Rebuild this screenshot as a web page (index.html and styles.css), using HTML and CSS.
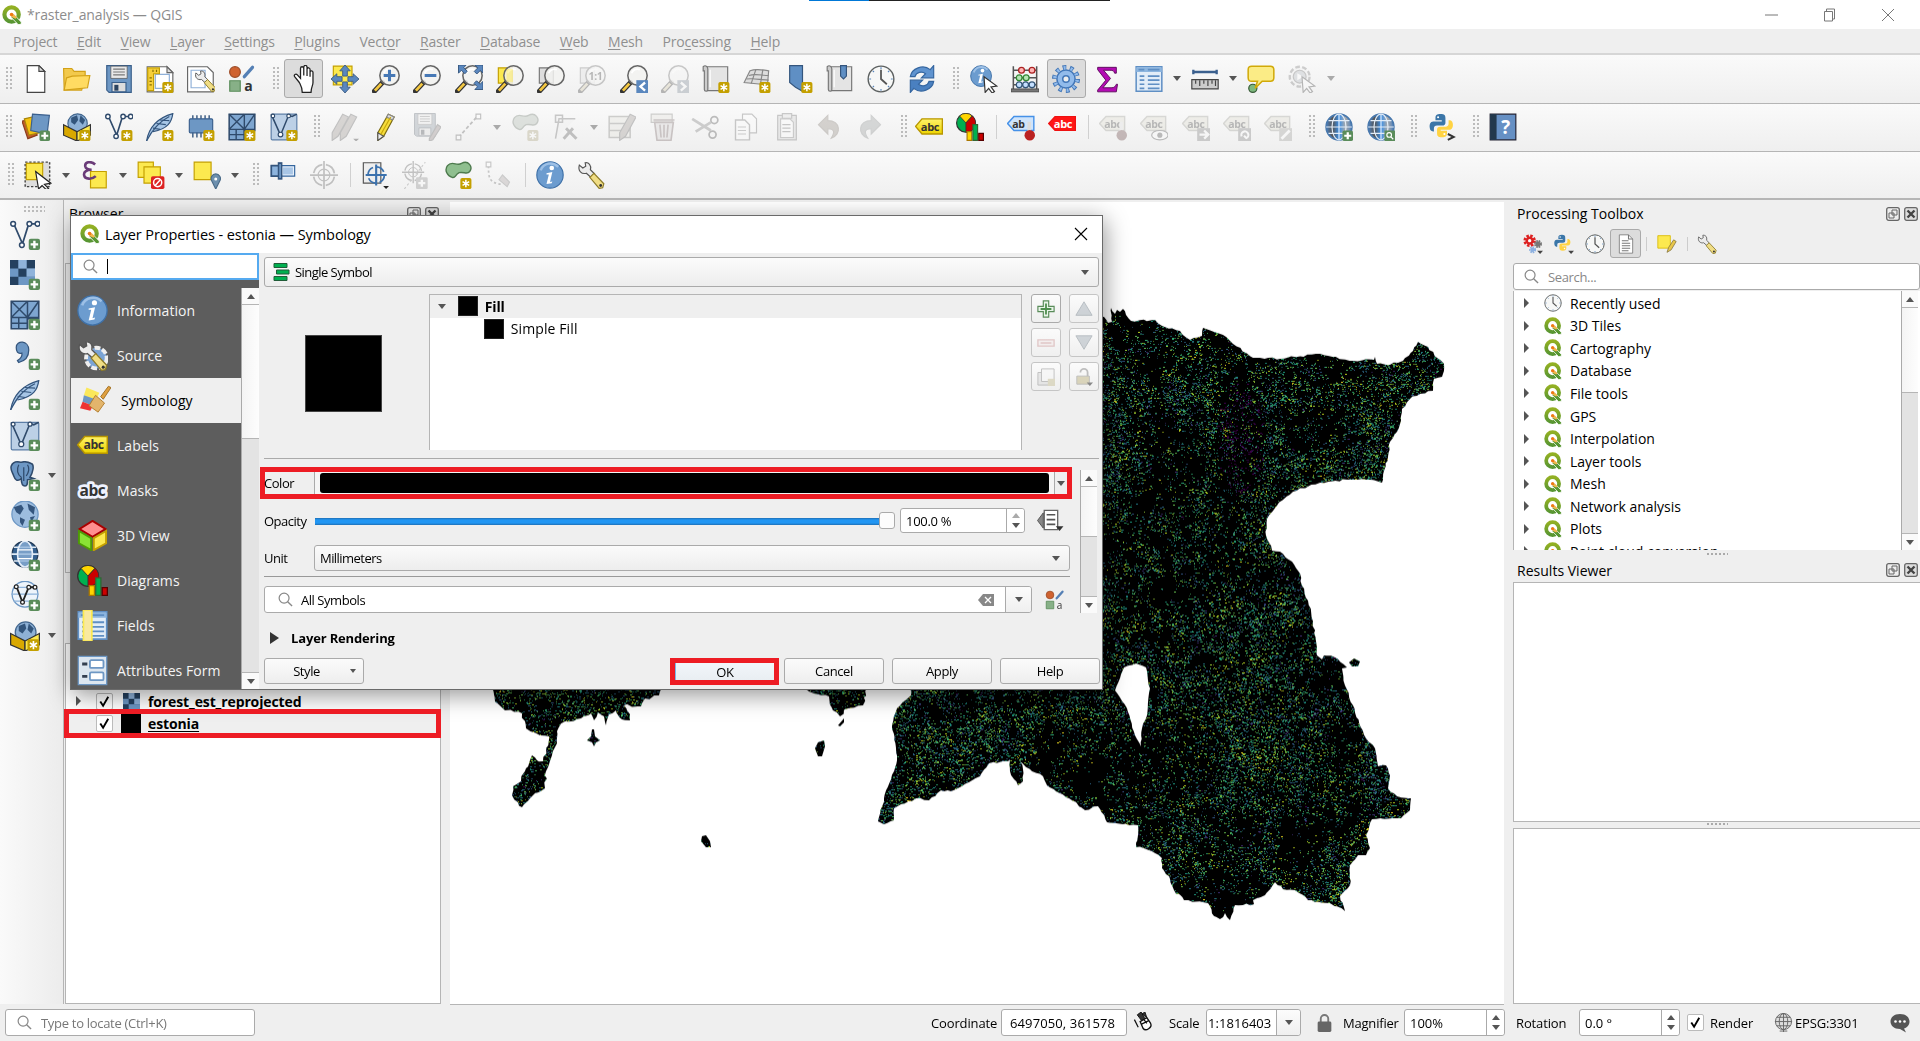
FILE: index.html
```html
<!DOCTYPE html>
<html lang="en">
<head>
<meta charset="utf-8">
<title>*raster_analysis — QGIS</title>
<link rel="stylesheet" href="styles.css">
</head>
<body>
<svg class="defs" aria-hidden="true">
  <defs>
    <linearGradient id="g-q" x1="0" y1="0" x2="0" y2="1"><stop offset="0" stop-color="#93b023"/><stop offset="1" stop-color="#589632"/></linearGradient>
    <linearGradient id="g-globe" x1="0" x2="1" y1="0" y2="0"><stop offset="0" stop-color="#4d80bd"/><stop offset=".25" stop-color="#555"/><stop offset=".5" stop-color="#3a8fe8"/><stop offset=".75" stop-color="#aaa"/><stop offset="1" stop-color="#4d80bd"/></linearGradient>
    <linearGradient id="g-yel" x1="0" y1="0" x2="0" y2="1"><stop offset="0" stop-color="#fff36a"/><stop offset="1" stop-color="#edd400"/></linearGradient>
  </defs>
  <symbol id="plus" viewBox="0 0 24 24"><rect x="15" y="15" width="9" height="9" rx="1.6" fill="#5a8c5a"/><path d="M19.5 16.5v6M16.500 19.500h6" stroke="#fff" stroke-width="1.9"/></symbol>
  <symbol id="star" viewBox="0 0 24 24"><rect x="14" y="14.500" width="9.500" height="9.500" rx="1.600" fill="#c4a000"/><path d="M18.750 16v6.500M15.900 17.600l5.700 3.300M15.900 20.900l5.700-3.300" stroke="#fff" stroke-width="1.300"/></symbol>
  <symbol id="q" viewBox="0 0 24 24"><circle cx="11.500" cy="11.500" r="8.600" fill="none" stroke="url(#g-q)" stroke-width="5"/><path d="M11 11l3.200.3 9 9.200-.4 2.900h-3.500l-8.200-8.500z" fill="#589632" stroke="#fff" stroke-width="1"/><path d="M11 11l3.500.5 3.500 3.500-1.700 1.600-4.300-2z" fill="#f3b64c"/><circle cx="11.500" cy="11.500" r="2.200" fill="#ee7913"/></symbol>
  <symbol id="new" viewBox="0 0 24 24"><path d="M4.500.500h10l5 5v18h-15z" fill="#fff" stroke="#444"/><path d="M14.500.500v5h5z" fill="#ddd" stroke="#444"/></symbol>
  <symbol id="open" viewBox="0 0 24 24"><path d="M.500 3h7l2 2.500H19v4L16 21.500H1z" fill="#f2c94c" stroke="#d2a118"/><path d="M3 11l5-1.500 15-.5-2 10.500L1 21.500z" fill="#ffdb62" stroke="#d2a118"/></symbol>
  <symbol id="save" viewBox="0 0 24 24"><path d="M1.500.500h21v23h-19l-2-2z" fill="#6d97c4" stroke="#3a5f8a"/><path d="M5 1h14v10.500H5z" fill="#e8e8e8" stroke="#555" stroke-width=".6"/><path d="M7 3.500h10M7 6h10M7 8.500h10" stroke="#777"/><path d="M6 15h12v8H6z" fill="#ddd" stroke="#3a5f8a"/><path d="M8 17h3.500v5H8z" fill="#2b4360"/></symbol>
  <symbol id="layout" viewBox="0 0 24 24"><path d="M1 1.500h17l5 5V23H1z" fill="#fff" stroke="#666"/><path d="M8 8h12v12H8z" fill="#fff" stroke="#8fb0d8"/><path d="M1.500 2.500h10v5h-5V22h-5z" fill="#f6cf3a" stroke="#c4a000"/><path d="M3 11h2M3 14h2M3 17h2M6 4v2M9 4v2" stroke="#866e00"/><path d="M18 1.500v5h5z" fill="#ddd" stroke="#666"/><use href="#star"/></symbol>
  <symbol id="wrench" viewBox="0 0 24 24"><path d="M2 3.500L5 6l2.500-1.500L7 1.500c3-.5 5.500 2 4.500 6L15 11l-3 3-4-3.500C4 11.500.500 8.500 2 3.500z" fill="#ececec" stroke="#555"/><path d="M11 14l3.500-3.500 8.500 9-1 3.500-3 .500z" fill="#f0dd84" stroke="#8c7a28"/><circle cx="20.300" cy="21" r="1.200" fill="#333"/></symbol>
  <symbol id="manager" viewBox="0 0 24 24"><path d="M.500 1.500h17l5 5V23H.500z" fill="#fff" stroke="#666"/><path d="M3.500 4.500h12v15h-12z" fill="#fff" stroke="#8fb0d8"/><g transform="translate(6 4) scale(.8)"><use href="#wrench" width="24" height="24"/></g></symbol>
  <symbol id="style" viewBox="0 0 24 24"><circle cx="6" cy="6" r="4.600" fill="#cf6230" stroke="#9c4a25"/><path d="M21 2l-7 8" stroke="#5580b5" stroke-width="2.800" stroke-linecap="round"/><path d="M1.500 13.500h9v9h-9z" fill="#87b087" stroke="#5a8c5a"/><text x="14" y="22.500" font-size="12" fill="#333">a</text></symbol>
  <symbol id="hand" viewBox="0 0 24 24"><path d="M8 15L4 10c-1-1.500 1-3 2.300-1.500L9 11.500V3c0-2 2.600-2 2.800 0V1.800c.2-2 2.700-1.800 2.800 0V3.500c.3-1.600 2.500-1.500 2.600.3V6c.3-1.500 2.500-1.300 2.500.5V15c0 3-1.700 4-1.700 8.500H10.500C10.500 19 9 17 8 15zM11.800 3v6M14.600 3v6.500M17.200 5v5" fill="#fff" stroke="#222" stroke-width="1.100"/></symbol>
  <symbol id="pan" viewBox="0 0 24 24"><path d="M2 1h16v16H2z" fill="#fce94f" stroke="#c4a000"/><path d="M12 0l4.500 5H14v4.500h-4V5H7.500zM12 24l4.500-5H14v-4.500h-4V19H7.500zM0 12l5-4.500V10h4.500v4H5v2.500zM24 12l-5-4.500V10h-4.500v4H19v2.500z" fill="#5a87be" stroke="#34557d" stroke-width=".7"/></symbol>
  <symbol id="mag" viewBox="0 0 24 24"><path d="M9 15L2 22.500" stroke="#333" stroke-width="4.200" stroke-linecap="round"/><path d="M8 16L2.500 22" stroke="#f4c842" stroke-width="2.400"/><circle cx="15" cy="9" r="8.300" fill="#f2f2f0" fill-opacity=".85" stroke="#666" stroke-width="1.300"/><path d="M10 7c1-3 4-4 7-3" stroke="#fff" fill="none" stroke-width="1.500"/></symbol>
  <symbol id="zin" viewBox="0 0 24 24"><use href="#mag"/><path d="M15 4v10M10 9h10" stroke="#4678b5" stroke-width="2.600"/></symbol>
  <symbol id="zout" viewBox="0 0 24 24"><use href="#mag"/><path d="M10 9h10" stroke="#4678b5" stroke-width="2.600"/></symbol>
  <symbol id="zfull" viewBox="0 0 24 24"><use href="#mag"/><path d="M3 0h6.500L7.500 2.300l3 3L8.500 7.500l-3-3L3 7zM24 0v7l-2.300-2.300-3 3L16.500 5.500l3-3L17 0zM24 21h-7l2.300-2.300-3-3 2.200-2.200 3 3L24 14z" fill="#5a87be" stroke="#34557d" stroke-width=".8"/></symbol>
  <symbol id="zsel" viewBox="0 0 24 24"><path d="M2 2.500h12v13H2z" fill="#fce94f" stroke="#c4a000"/><use href="#mag"/><path d="M9 3.500h5.500v11H9z" fill="#fce94f" opacity=".45"/></symbol>
  <symbol id="zlay" viewBox="0 0 24 24"><path d="M2 2.500h12v13H2z" fill="#ddd" stroke="#777"/><use href="#mag"/></symbol>
  <symbol id="znat" viewBox="0 0 24 24"><use href="#zlay"/><text x="9" y="12.500" font-size="9" font-weight="700" fill="#333">1:1</text></symbol>
  <symbol id="zlast" viewBox="0 0 24 24"><use href="#mag"/><path d="M14 13h10v11H14z" fill="#5a87be"/><path d="M21.500 15l-4 3.500 4 3.500" stroke="#fff" stroke-width="2" fill="none"/></symbol>
  <symbol id="znext" viewBox="0 0 24 24"><use href="#mag"/><path d="M14 13h10v11H14z" fill="#5a87be"/><path d="M17 15l4 3.500-4 3.500" stroke="#fff" stroke-width="2" fill="none"/></symbol>
  <symbol id="map" viewBox="0 0 24 24"><path d="M4 1.500h18V22H4z" fill="#e4e4e4" stroke="#777"/><path d="M1 1.500c2-2 4 0 4 2V21c0 2-3 2-3 0V5H1z" fill="#ccc" stroke="#777"/><path d="M7 19V4" stroke="#fff"/></symbol>
  <symbol id="newmap" viewBox="0 0 24 24"><use href="#map"/><use href="#star"/></symbol>
  <symbol id="new3d" viewBox="0 0 24 24"><path d="M6 5c5-2 10-1 16 0l-1 12-20-2z" fill="#ddd" stroke="#888"/><path d="M5 9c6-2 11 0 17 0M3 12c7-1 12 1 19 1M11 4L7 16M17 4l-2 12" stroke="#888" fill="none"/><use href="#star"/></symbol>
  <symbol id="bm" viewBox="0 0 24 24"><path d="M4 .500h11v22L9 19l-5-4z" fill="#5f8fc4" stroke="#34557d"/><use href="#star"/></symbol>
  <symbol id="showbm" viewBox="0 0 24 24"><use href="#map"/><path d="M12.500.500h5v9l-2.500 2.500-2.500-2.500z" fill="#5f8fc4" stroke="#34557d"/></symbol>
  <symbol id="clock" viewBox="0 0 24 24"><circle cx="12" cy="12" r="11" fill="#f7f8f7" stroke="#5c6060" stroke-width="1.200"/><path d="M12 4v8l5 4.500" fill="none" stroke="#555" stroke-width="1.500"/><path d="M12 2v1.500M12 20.500V22M2 12h1.500M20.500 12H22M5 5l1 1M18 18l1 1M5 19l1-1M18 6l1-1" stroke="#5a87be"/></symbol>
  <symbol id="refresh" viewBox="0 0 24 24"><path d="M2 10C3 3 13-1 19 4l3-3.500V11H11.500L15 7.500C12 5 7 6 6 10z" fill="#5f93cf" stroke="#3566a0"/><path d="M22 14c-1 7-11 11-17 6l-3 3.500V13h10.500L9 16.500c3 2.500 8 1.500 9-2.500z" fill="#4a80c0" stroke="#3566a0"/></symbol>
  <symbol id="cursor" viewBox="0 0 24 24"><path d="M12 10l11 8-5 .800 3 4-2 1.200-3-4-3 3.500z" fill="#fff" stroke="#333"/></symbol>
  <symbol id="info" viewBox="0 0 24 24"><circle cx="12" cy="12" r="11.300" fill="#6c9ccf" stroke="#3f71a8"/><path d="M4 8a9 9 0 0 1 15-3" stroke="#9dc0e6" stroke-width="2" fill="none"/><circle cx="13.500" cy="6" r="2" fill="#fff"/><path d="M9 10.500l5-1-2 8.500 2-.5-.5 1.500-4.500.8 2-8.300H9z" fill="#fff"/></symbol>
  <symbol id="ident" viewBox="0 0 24 24"><svg width="19" height="19" viewBox="0 0 24 24"><use href="#info"/></svg><use href="#cursor"/></symbol>
  <symbol id="abacus" viewBox="0 0 24 24"><path d="M2 1v20M22 1v20M2 4.500h20M2 11h20M2 17h20" stroke="#555" stroke-width="1.300"/><path d="M0 20.500h24V23H0z" fill="#777" stroke="#444" stroke-width=".7"/><g stroke-width="1.100"><g fill="#ffb5b5" stroke="#a22"><circle cx="9" cy="4.500" r="2.500"/><circle cx="18" cy="4.500" r="2.500"/></g><g fill="#b5e5b5" stroke="#383"><circle cx="7" cy="11" r="2.500"/><circle cx="13" cy="11" r="2.500"/></g><g fill="#c5e0ff" stroke="#357"><circle cx="7" cy="17" r="2.500"/><circle cx="12.500" cy="17" r="2.500"/><circle cx="18" cy="17" r="2.500"/></g></g></symbol>
  <symbol id="gear" viewBox="0 0 24 24"><circle cx="12" cy="12" r="9.800" fill="none" stroke="#4377b8" stroke-width="4.400" stroke-dasharray="3.100 3.050"/><circle cx="12" cy="12" r="7.800" fill="#92bbeb" stroke="#4377b8" stroke-width="1.300"/><circle cx="12" cy="12" r="9.600" fill="none" stroke="#92bbeb" stroke-width="3" stroke-dasharray="1.700 4.330" stroke-dashoffset="-.7"/><circle cx="12" cy="12" r="2.800" fill="#eee" stroke="#4377b8" stroke-width="1.300"/></symbol>
  <symbol id="sigma" viewBox="0 0 24 24"><path d="M4 2h16v5h-1.500C18 5 17 4.500 14.500 4.500H9l6 7-6.500 8h7c3 0 3.500-1 4.500-3h1L20 23H4v-1.500l7-8.500-7-9z" fill="#b30bb3" stroke="#5b0b5b" stroke-width=".8"/></symbol>
  <symbol id="table" viewBox="0 0 24 24"><path d="M1 1.500h22v21H1z" fill="#e2edf8" stroke="#5f8fc4" stroke-width="1.300"/><path d="M1 2h22v4H1z" fill="#8cb5df"/><path d="M4 9.500h4M4 13h4M4 16.500h4M4 20h4M11 9.500h10M11 13h10M11 16.500h10M11 20h10M3 4h5M11 4h10" stroke="#5f8fc4" stroke-width="1.400"/></symbol>
  <symbol id="ruler" viewBox="0 0 24 24"><path d="M2 6h20M2 4v4M22 4v4" stroke="#3b608e" stroke-width="2"/><path d="M.700 12.500h22.600v8H.700z" fill="#ccc" stroke="#444"/><path d="M4 13v3M7.500 13v5M11 13v3M14.500 13v5M18 13v3M21 13v5" stroke="#444"/></symbol>
  <symbol id="tip" viewBox="0 0 24 24"><circle cx="5" cy="20" r="3.500" fill="#7db87d" stroke="#375a37"/><path d="M4 1h16q3 0 3 3v7q0 3-3 3h-7l-6 6 2-6H4q-3 0-3-3V4q0-3 3-3z" fill="#fbec86" stroke="#d1a908" stroke-width="1.300"/></symbol>
  <symbol id="action" viewBox="0 0 24 24"><circle cx="10" cy="10" r="8.500" fill="#eee" stroke="#777" stroke-width="2" stroke-dasharray="4 2"/><circle cx="10" cy="10" r="5.500" fill="#9fb7d0" stroke="#666"/><path d="M8 7l5 3-5 3z" fill="#fff"/><use href="#cursor"/></symbol>
  <symbol id="dsm" viewBox="0 0 24 24"><path d="M0 7l9-2 4 14-8 3z" fill="#c05a2c" stroke="#8a3d1c"/><path d="M2 5l9-2 4 14-9 2z" fill="#f5c211" stroke="#a8850a"/><path d="M9 1l14.500 1-2 16-14-3z" fill="#6d97c4" stroke="#3b608e"/><use href="#plus"/></symbol>
  <symbol id="box" viewBox="0 0 24 24"><circle cx="12.500" cy="9" r="8.300" fill="#8eb1d6" stroke="#43678f"/><path d="M7 4l5-2 1 4-3 4-3-2zM15 2l4 4-2 4-3-3z" fill="#33557c"/><path d="M.500 10L12 16v8L.500 19z" fill="#d9a800" stroke="#333"/><path d="M12 16l11.500-6v9L12 24z" fill="#fde94f" stroke="#333"/></symbol>
  <symbol id="geopkg" viewBox="0 0 24 24"><use href="#box"/><use href="#star"/></symbol>
  <symbol id="vec" viewBox="0 0 24 24"><path d="M3 3l7 16 5-16M17 3h5" stroke="#2f4a6b" stroke-width="1.400" fill="none"/><g fill="#fff" stroke="#2f4a6b" stroke-width="1.200"><circle cx="2.500" cy="3" r="1.900"/><circle cx="15.500" cy="3" r="1.900"/><circle cx="22" cy="3" r="1.900"/><circle cx="9.500" cy="20" r="1.900"/></g></symbol>
  <symbol id="nvec" viewBox="0 0 24 24"><use href="#vec"/><use href="#star"/></symbol>
  <symbol id="pvec" viewBox="0 0 24 24"><use href="#vec"/><use href="#plus"/></symbol>
  <symbol id="feather" viewBox="0 0 24 24"><path d="M.500 24C2 15 7 5 23 .500c-1 7-4 13-17 15.500" fill="#a7c6e6" stroke="#34557d"/><path d="M.500 24C5 15 10 8 20 3M6 13l6 1M9 9l8 1M12 6l8 .500" stroke="#34557d" fill="none"/></symbol>
  <symbol id="nfea" viewBox="0 0 24 24"><use href="#feather"/><use href="#star"/></symbol>
  <symbol id="pfea" viewBox="0 0 24 24"><use href="#feather"/><use href="#plus"/></symbol>
  <symbol id="chip" viewBox="0 0 24 24"><path d="M5 2v19M8.500 2v19M12 2v19M15.500 2v19M19 2v19" stroke="#34557d" stroke-width="1.200"/><rect x="2" y="5" width="20" height="12" rx="1" fill="#6d97c4" stroke="#3b608e"/><use href="#star"/></symbol>
  <symbol id="mesh" viewBox="0 0 24 24"><path d="M1 1h22v14H14v8H1z" fill="#7ea6d0" stroke="#2f4a6b" stroke-width="1.300"/><path d="M1 14h22M14 1v22M1 1l13 13M14 1L1 14M23 1l-9 13M7 14v9M1 18.500h13" stroke="#2f4a6b" stroke-width="1.200"/></symbol>
  <symbol id="nmesh" viewBox="0 0 24 24"><use href="#mesh"/><use href="#star"/></symbol>
  <symbol id="pmesh" viewBox="0 0 24 24"><use href="#mesh"/><use href="#plus"/></symbol>
  <symbol id="vt" viewBox="0 0 24 24"><rect x="1" y="1" width="22" height="22" rx="1" fill="#bcd0e6" stroke="#5b7da6"/><path d="M1 1l8 18 7-17 3 1 4-2" stroke="#2f4a6b" stroke-width="1.300" fill="none"/><g fill="#fff" stroke="#2f4a6b"><circle cx="9" cy="18.500" r="2"/><circle cx="16" cy="2.500" r="1.600"/><circle cx="2.500" cy="2.500" r="1.500"/></g></symbol>
  <symbol id="nvt" viewBox="0 0 24 24"><use href="#vt"/><use href="#star"/></symbol>
  <symbol id="pvt" viewBox="0 0 24 24"><use href="#vt"/><use href="#plus"/></symbol>
  <symbol id="pen" viewBox="0 0 24 24"><path d="M5 17L14 1l5 2.500L10 20l-5 3.500z" fill="#f6dd3b" stroke="#7c6b10"/><path d="M5 17l5 3-5 3.500z" fill="#eee" stroke="#555"/><path d="M14 1l5 2.500L17.500 6 12.500 3.500z" fill="#ddd" stroke="#888"/><path d="M7.500 18.500l8.500-15" stroke="#c9a70b"/></symbol>
  <symbol id="pens" viewBox="0 0 24 24"><path d="M1 17L10 1l5 2.500L6 20l-5 3.500zM8 17l9-16 5 2.500L13 20l-5 3.500z" fill="#a98d7c" stroke="#555"/><path d="M19 22h5l-2.500 2.500z" fill="#222"/></symbol>
  <symbol id="saveed" viewBox="0 0 24 24"><g transform="scale(.85)"><use href="#save" width="24" height="24"/></g><path d="M14 22l7-12 3 2-7 11-3 1z" fill="#a77" stroke="#555"/></symbol>
  <symbol id="line" viewBox="0 0 24 24"><path d="M3 21L19 3" stroke="#555" stroke-width="1.500" stroke-dasharray="3 2"/><path d="M1 19h4v4H1zM18 1h4v4h-4z" fill="#fff" stroke="#555"/></symbol>
  <symbol id="blob" viewBox="0 0 24 24"><path d="M3 4c4-5 8 1 12-2 6-3 10 3 7 7-2 3-5 0-9 1-4 2-3 5-6 4-4-1-7-6-4-10z" fill="#8fbf8f" stroke="#4d7a4d" stroke-width="1.200"/></symbol>
  <symbol id="addpoly" viewBox="0 0 24 24"><use href="#blob"/><use href="#star"/></symbol>
  <symbol id="vertex" viewBox="0 0 24 24"><path d="M3 22L6 5h14M3 2h6v6H3z" fill="#eee" stroke="#666" stroke-width="1.300"/><path d="M10 22l8-9M12 13l9 9" stroke="#555" stroke-width="2.500"/></symbol>
  <symbol id="modattr" viewBox="0 0 24 24"><path d="M1 3h18v18H1zM1 9h18M1 15h18" fill="#e5e2c5" stroke="#776" stroke-width="1.300"/><g transform="translate(5)"><path d="M5 17L14 1l5 2.500L10 20l-5 3.500z" fill="#a98d7c" stroke="#555"/></g></symbol>
  <symbol id="trash" viewBox="0 0 24 24"><path d="M1 1h18v7H1z" fill="#e5e2c5" stroke="#776"/><path d="M4 8l2 15.500h12L20 8z" fill="#dcc" stroke="#955" stroke-width="1.400"/><path d="M3 6h18M8.500 10l1 11M12 10v11M15.500 10l-1 11" stroke="#955" stroke-width="1.400"/></symbol>
  <symbol id="cut" viewBox="0 0 24 24"><path d="M1 5l16 10M4 16L17 8" stroke="#777" stroke-width="2.400"/><circle cx="20" cy="6" r="3" fill="none" stroke="#444" stroke-width="1.500"/><circle cx="18.500" cy="18.500" r="3" fill="none" stroke="#444" stroke-width="1.500"/></symbol>
  <symbol id="copy" viewBox="0 0 24 24"><path d="M9 1h8l4 4v12H9z" fill="#fff" stroke="#666"/><path d="M3 6h8l4 4v13H3z" fill="#fff" stroke="#666" stroke-width="1.200"/><path d="M5 12h7M5 15h7M5 18h7" stroke="#777"/></symbol>
  <symbol id="paste" viewBox="0 0 24 24"><path d="M4 2h16v21H4z" fill="#ccc" stroke="#666"/><path d="M6.500 5h8l3 3v13h-11z" fill="#fff" stroke="#777"/><path d="M8 .500h8v4H8zM8 10h7M8 13h7M8 16h7" stroke="#666" fill="#ddd"/></symbol>
  <symbol id="undo" viewBox="0 0 24 24"><path d="M3 10l8-8v4.500c11 0 12 12 3 15 3-5 3-8-3-8V18z" fill="#a5815c" stroke="#8f6d4c"/></symbol>
  <symbol id="redo" viewBox="0 0 24 24"><path d="M21 10l-8-8v4.500c-11 0-12 12-3 15-3-5-3-8 3-8V18z" fill="#899" stroke="#788"/></symbol>
  <symbol id="abc" viewBox="0 0 24 24"><path d="M6 5h17.500v13H6L.500 11.500z" fill="url(#g-yel)" stroke="#b89600" stroke-width="1.200"/><text x="5" y="15" font-size="9.500" font-weight="700" fill="#333">abc</text></symbol>
  <symbol id="tag" viewBox="0 0 24 24"><path d="M6 3h16v12H6L.500 9z" fill="#e4dca0" stroke="#997" stroke-width="1.200"/><text x="4.500" y="12.500" font-size="9" font-weight="700" fill="#333">abc</text></symbol>
  <symbol id="diag" viewBox="0 0 24 24"><circle cx="8.500" cy="8.500" r="8" fill="#00b050" stroke="#333"/><path d="M8.500 8.500L3 2.500a8 8 0 0 1 11 0z" fill="#ffd500" stroke="#333" stroke-width=".7"/><path d="M8.500 8.500l5.500-6a8 8 0 0 1-5.500 14z" fill="#c00" stroke="#333" stroke-width=".7"/><path d="M9.500 16h4v7.500h-4z" fill="#ffd500" stroke="#a70"/><path d="M14.500 10h4v13.500h-4z" fill="#00b050" stroke="#363"/><path d="M19.500 17.500h4v6h-4z" fill="#c00" stroke="#500"/></symbol>
  <symbol id="pin" viewBox="0 0 24 24"><path d="M19 7.500v9" stroke="#ddd" stroke-width="3"/><circle cx="19.500" cy="19" r="4.500" fill="#b22"/></symbol>
  <symbol id="abpin" viewBox="0 0 24 24"><path d="M6 3h17v12H6L.500 9z" fill="#cfe4fb" stroke="#4591e8" stroke-width="1.200"/><text x="4.500" y="12.500" font-size="9" font-weight="700" fill="#333">ab</text><use href="#pin"/></symbol>
  <symbol id="redabc" viewBox="0 0 24 24"><path d="M6 3h17.500v12H6L.500 9z" fill="#ff1515" stroke="#e11"/><text x="5" y="12.500" font-size="9.500" font-weight="700" fill="#fff">abc</text></symbol>
  <symbol id="l1" viewBox="0 0 24 24"><use href="#tag"/><use href="#pin"/></symbol>
  <symbol id="l2" viewBox="0 0 24 24"><use href="#tag"/><ellipse cx="17" cy="19" rx="7" ry="4" fill="#fff" stroke="#444"/><circle cx="17" cy="19" r="2.200" fill="#444"/></symbol>
  <symbol id="l3" viewBox="0 0 24 24"><use href="#tag"/><path d="M13 13h11v11H13z" fill="#777"/><path d="M15 18.500h7M19 15l3.500 3.500L19 22" stroke="#fff" stroke-width="2" fill="none"/></symbol>
  <symbol id="l4" viewBox="0 0 24 24"><use href="#tag"/><path d="M13 13h11v11H13z" fill="#777"/><path d="M16 20a3 3 0 1 1 4 1.500l-2-2" stroke="#fff" stroke-width="1.800" fill="none"/></symbol>
  <symbol id="l5" viewBox="0 0 24 24"><use href="#tag"/><path d="M13 13h11v11H13z" fill="#998"/><path d="M15 22l7-7" stroke="#fff" stroke-width="2.400"/></symbol>
  <symbol id="globe" viewBox="0 0 24 24"><circle cx="12" cy="12" r="11" fill="url(#g-globe)" stroke="#4878ad" stroke-width="1.500"/><path d="M1 12h22M3 6.500h18M3 17.500h18M12 1v22" stroke="#e2ecf8" stroke-width="1"/><ellipse cx="12" cy="12" rx="6" ry="11" fill="none" stroke="#e2ecf8" stroke-width="1"/></symbol>
  <symbol id="gplus" viewBox="0 0 24 24"><use href="#globe"/><use href="#plus"/></symbol>
  <symbol id="gmag" viewBox="0 0 24 24"><use href="#globe"/><rect x="15" y="15" width="9" height="9" fill="#5a8c5a"/><circle cx="19" cy="18.800" r="2" fill="none" stroke="#fff"/><path d="M20.500 20.500l2 2" stroke="#fff"/></symbol>
  <symbol id="py" viewBox="0 0 24 24"><path d="M11 1c-4 0-5 1-5 4v2h6v1H4c-3 0-4 3-3.500 6 .5 3 2 3.500 4 3.500V15c0-2 1-3 3-3h5c2 0 3-1 3-3V5c0-3-1-4-4.500-4z" fill="#3b76a8"/><path d="M12 23c4 0 5-1 5-4v-2h-6v-1h8c3 0 4-3 3.500-6-.5-2.500-2-3-4-3v3c0 2-1 3-3 3h-5c-2 0-3 1-3 3v3c0 3 1 4 4.500 4z" fill="#ffd343"/><circle cx="8.500" cy="4" r="1" fill="#fff"/><circle cx="14.500" cy="20" r="1" fill="#fff"/></symbol>
  <symbol id="pycon" viewBox="0 0 24 24"><g transform="translate(1) scale(.9)"><use href="#py" width="24" height="24"/></g><path d="M17 18l5 2.500-5 2.500" stroke="#333" stroke-width="1.700" fill="none"/></symbol>
  <symbol id="help" viewBox="0 0 24 24"><path d="M1 1h22v22H1z" fill="#6690c4" stroke="#223"/><path d="M1 1h5.500v22H1z" fill="#22384c"/><text x="10.500" y="18" font-size="16" fill="#fff">?</text></symbol>
  <symbol id="sel" viewBox="0 0 24 24"><path d="M1 1h21v21H1z" fill="#ddd" stroke="#444" stroke-width="1.200" stroke-dasharray="2 1.500"/><path d="M2 2h14v14H2z" fill="#fce94f" stroke="#c4a000"/><path d="M10 9l13 10-5.500 1 3.500 3.500-2 1-3.500-3.500-3 3z" fill="#fff" stroke="#222"/></symbol>
  <symbol id="eps" viewBox="0 0 24 24"><path d="M9 9h13.500v14H9z" fill="#fce94f" stroke="#c4a000"/><path d="M13 3C9-.500 4 1 4.500 4.500 5 7.500 8 7.500 10 7.500 6 7.500 3 9 3.500 12c.5 4 7 4 10 1" stroke="#6a3b78" stroke-width="2.200" fill="none"/></symbol>
  <symbol id="desel" viewBox="0 0 24 24"><path d="M1 1h13v13H1z" fill="#fce94f" stroke="#c4a000"/><path d="M6 5h14v14H6z" fill="#fce94f" stroke="#c4a000"/><rect x="12" y="13" width="11.500" height="11" rx="1.500" fill="#d22"/><circle cx="17.700" cy="18.500" r="3.500" fill="none" stroke="#fff" stroke-width="1.300"/><path d="M20 16l-4.500 5" stroke="#fff" stroke-width="1.300"/></symbol>
  <symbol id="selloc" viewBox="0 0 24 24"><path d="M1 1h14.500v15H1z" fill="#fce94f" stroke="#c4a000"/><path d="M19.500 24l-3.500-7a4 4 0 1 1 7 0z" fill="#6d90ae" stroke="#4a6b88"/><circle cx="19.500" cy="15.500" r="1.300" fill="#fff"/></symbol>
  <symbol id="snap" viewBox="0 0 24 24"><path d="M2 4h20v9H2z" fill="#e8f1fb" stroke="#34669e"/><path d="M12 5.500h8.500v6H12z" fill="#a9c6e6"/><path d="M2 4h8v9H2z" fill="#8db4dd" stroke="#34557d" stroke-width="1.400"/><path d="M9.500 1v15" stroke="#34557d" stroke-width="4"/><path d="M9.500 2.500v12" stroke="#6d97c4" stroke-width="1.500"/></symbol>
  <symbol id="target" viewBox="0 0 24 24"><circle cx="12" cy="12" r="9" fill="none" stroke="#555" stroke-width="1.500" stroke-dasharray="11 3.100" stroke-dashoffset="-1.500"/><circle cx="12" cy="12" r="5" fill="none" stroke="#555"/><path d="M12 0v24M0 12h24" stroke="#555" stroke-width="1.500"/></symbol>
  <symbol id="cad" viewBox="0 0 24 24"><path d="M2 1.500h15V19H2z" fill="#eee" stroke="#555"/><circle cx="13" cy="12" r="7" fill="none" stroke="#3b71ad" stroke-width="1.500" stroke-dasharray="8 3"/><path d="M13 3v18M4 12h18" stroke="#3b71ad" stroke-width="1.800"/><path d="M19 21.500h5L21.500 24z" fill="#222"/></symbol>
  <symbol id="cadadd" viewBox="0 0 24 24"><g transform="scale(.8)"><use href="#target" width="24" height="24"/></g><path d="M2 24L20 1" stroke="#777" stroke-dasharray="2 2"/><rect x="12" y="14" width="10" height="10" rx="1" fill="#888"/><path d="M17 16v6M14 19h6" stroke="#fff" stroke-width="2"/></symbol>
  <symbol id="trace" viewBox="0 0 24 24"><path d="M3 4c0 10 0 15 12 16" fill="none" stroke="#666" stroke-dasharray="2 2" stroke-width="1.500"/><path d="M1 1h4v4H1z" fill="#fff" stroke="#666"/><path d="M15 12l6 6-2 4-7-6z" fill="#b99" stroke="#777"/></symbol>
  <symbol id="raster" viewBox="0 0 24 24"><path d="M0 0h20v20H0z" fill="#6d97c4"/><path d="M6.700 0h6.600v6.700H20v6.600h-6.700V6.700H6.700z" fill="#34557d"/><path d="M0 0h6.700v6.700H0zM13.300 0H20v6.700h-6.700zM6.700 6.700h6.600v6.600H6.700zM0 13.300h6.700V20H0z" fill="#24405f"/><path d="M6.700 0h6.600v6.700H6.700zM13.300 6.700H20v6.600h-6.700z" fill="#8fb3da"/></symbol>
  <symbol id="pras" viewBox="0 0 24 24"><use href="#raster"/><use href="#plus"/></symbol>
  <symbol id="comma" viewBox="0 0 24 24"><path d="M5 6c0-6 10-6 10 2 0 6-4 9-8 10l-1-1.500c3-2 4-4 3.500-6C6 11.500 5 9 5 6z" fill="#6d97c4" stroke="#34557d"/><use href="#plus"/></symbol>
  <symbol id="pg" viewBox="0 0 24 24"><path d="M1 4c2-5 6-3 8-3 3-1 6 0 8 1 3 1 1 8-1 11l3 1-5 1c0 3 0 5-2 5-3 0-3-4-3-6-3 3-5 1-6-2S0 7 1 4z" fill="#6d97c4" stroke="#2f4a6b" stroke-width="1.200"/><path d="M7 3c-2 4-1 8 2 10M14 3c2 3 1 6-1 9M11 5v11" stroke="#2f4a6b" fill="none"/><use href="#plus"/></symbol>
  <symbol id="wms" viewBox="0 0 24 24"><circle cx="12" cy="10.500" r="10.500" fill="#9dbddf" stroke="#6d97c4"/><path d="M3 5l6-2 2 3-3 5-3-2zM14 2l6 3-1 6-4-4zM8 13l4 2-2 5-2-3zM16 13l4-1-3 5z" fill="#34557d"/><use href="#plus"/></symbol>
  <symbol id="wcs" viewBox="0 0 24 24"><circle cx="12" cy="10.500" r="10.300" fill="#34608f" stroke="#223a56"/><path d="M1 10.500h22M3 5h18M3 16h18" stroke="#dfe9f4" stroke-width="1.300"/><ellipse cx="12" cy="10.500" rx="6" ry="10.300" fill="#8fb3da" fill-opacity=".75" stroke="#e2ecf8" stroke-width="1.300"/><path d="M6 7h12M6 14h12" stroke="#fff"/><use href="#plus"/></symbol>
  <symbol id="wfs" viewBox="0 0 24 24"><circle cx="12" cy="10.500" r="10.300" fill="#eef4fb" stroke="#6d97c4"/><path d="M1 10.500h22M3 5h18M3 16h18" stroke="#8fb3da"/><path d="M5 4l5 13 5-12h5" stroke="#222" stroke-width="1.500" fill="none"/><g fill="#fff" stroke="#222"><circle cx="5" cy="4.500" r="1.500"/><circle cx="15" cy="5" r="1.500"/><circle cx="20" cy="5" r="1.500"/><circle cx="10" cy="17" r="1.500"/></g><use href="#plus"/></symbol>
  <symbol id="search" viewBox="0 0 16 16"><circle cx="6.500" cy="6.500" r="5.300" fill="none" stroke="#888" stroke-width="1.300"/><path d="M10.300 10.500L15 15" stroke="#888" stroke-width="1.500"/></symbol>
  <symbol id="source" viewBox="0 0 24 24"><circle cx="15" cy="14" r="8" fill="#7aa3d4" stroke="#eee" stroke-width="3" stroke-dasharray="4.500 1.500"/><use href="#wrench"/></symbol>
  <symbol id="brush" viewBox="0 0 24 24"><path d="M5 2l10 4-3 6-9-4z" fill="#fbe85a"/><path d="M3 8l9 3-2 5-8-3z" fill="#6d97c4"/><path d="M2 13l8 3-2 4-8-2z" fill="#e33"/><path d="M16 9L22 1l2 1-6 9z" fill="#e0a040" stroke="#9c6b1e" stroke-width=".7"/><path d="M12 8l7 6-5 7-7-5z" fill="#e3b56c" stroke="#b07a28" stroke-width=".7"/></symbol>
  <symbol id="masks" viewBox="0 0 26 24"><text x="2" y="17" font-size="13" font-weight="700" fill="#eef2ff" stroke="#eef2ff" stroke-width="4.500" stroke-linejoin="round">abc</text><text x="2" y="17" font-size="13" font-weight="700" fill="#333">abc</text></symbol>
  <symbol id="cube" viewBox="0 0 24 24"><path d="M12 .700L22 7l-10 6L2 7z" fill="#ff8f8f" stroke="#a00" stroke-width="1.500"/><path d="M1.500 8.500L11 14v9.300L1.500 18z" fill="#8ae234" stroke="#4e9a06" stroke-width="1.500"/><path d="M22.500 8.500L13 14v9.300l9.500-5.300z" fill="#fce94f" stroke="#c4a000" stroke-width="1.500"/></symbol>
  <symbol id="fields" viewBox="0 0 24 24"><use href="#table"/><path d="M5 0h6.500v24H5z" fill="#f8e9a0" stroke="#fce94f" stroke-width="1.300"/></symbol>
  <symbol id="form" viewBox="0 0 24 24"><path d="M1 1h22v22H1z" fill="#dce6f0" stroke="#6d97c4"/><path d="M4 7h4M4 16.500h4" stroke="#333f50" stroke-width="2.200"/><rect x="10" y="4" width="10.500" height="6" rx="1" fill="#fff" stroke="#6d97c4" stroke-width="1.400"/><rect x="10" y="13.500" width="10.500" height="6" rx="1" fill="#fff" stroke="#6d97c4" stroke-width="1.400"/></symbol>
  <symbol id="single" viewBox="0 0 16 18"><path d="M.500.500h13v4h-13zM3 7h12.500v4H3zM.500 13.500h13v4h-13z" fill="#00b050" stroke="#205c38"/></symbol>
  <symbol id="gears" viewBox="0 0 24 24"><circle cx="8" cy="8" r="5" fill="#d22" stroke="#d22" stroke-width="5" stroke-dasharray="2.500 1.420"/><circle cx="8" cy="8" r="2" fill="#fff"/><circle cx="18" cy="12" r="3" fill="#777" stroke="#777" stroke-width="3.500" stroke-dasharray="1.600 .800"/><circle cx="11.500" cy="19" r="2.500" fill="#8cb0e0" stroke="#8cb0e0" stroke-width="3.500" stroke-dasharray="1.400 .700"/><path d="M17 20h7l-3.500 4z" fill="#444"/></symbol>
  <symbol id="pym" viewBox="0 0 24 24"><g transform="scale(.87)"><use href="#py" width="24" height="24"/></g><path d="M17 20h7l-3.500 4z" fill="#444"/></symbol>
  <symbol id="doc" viewBox="0 0 24 24"><path d="M4 1h11l5 5v17H4z" fill="#fff" stroke="#777"/><path d="M15 1v5h5M7 8h8M7 11h10M7 14h10M7 17h10M7 20h8" stroke="#777" fill="none" stroke-width="1.300"/></symbol>
  <symbol id="editp" viewBox="0 0 24 24"><path d="M1 2h15v15H1z" fill="#fce94f" stroke="#d8b800"/><path d="M12 22l2-6 6-9 3 2-6 10z" fill="#e8c64a" stroke="#8a7a40"/></symbol>
  <symbol id="dock" viewBox="0 0 14 14"><rect x=".7" y=".7" width="12.600" height="12.600" rx="2" fill="#eee" stroke="#666" stroke-width="1.300"/><path d="M6 3h5v5H6zM3 6h5v5H3z" fill="#eee" stroke="#666"/></symbol>
  <symbol id="close" viewBox="0 0 14 14"><rect x=".7" y=".7" width="12.600" height="12.600" rx="2" fill="#ddd" stroke="#666" stroke-width="1.300"/><path d="M3.500 3.500l7 7M10.500 3.500l-7 7" stroke="#444" stroke-width="2.400"/></symbol>
  <symbol id="check" viewBox="0 0 16 16"><path d="M3.500 8l3 4.500L12 3" fill="none" stroke="#000" stroke-width="2"/></symbol>
  <symbol id="ddo" viewBox="0 0 28 24"><path d="M8 1.500h14v20H8z" fill="#fff" stroke="#666" stroke-width="1.400"/><path d="M7 4v16L1 12z" fill="#888" stroke="#555"/><path d="M10.500 6h9M10.500 11h9M10.500 16h9" stroke="#555" stroke-width="1.800"/><path d="M20 18h8l-4 5z" fill="#333"/></symbol>
  <symbol id="mouse" viewBox="0 0 20 22"><path d="M4 3l4-3 4 7-2 4zM9 2l3-2 2 6z" fill="#333" stroke="#111"/><path d="M7 10l7-4 4 6c2 4-5 9-8 5z" fill="#fff" stroke="#111" stroke-width="1.400"/><path d="M8 13l8-4M11 8l3 4M1 8l4 8" stroke="#111" stroke-width="1.300"/></symbol>
  <symbol id="lock" viewBox="0 0 16 20"><path d="M4 9V5.500a4 4 0 0 1 8 0V9" fill="none" stroke="#777" stroke-width="2"/><rect x=".7" y="8.500" width="14.600" height="11" rx="1.500" fill="#666"/></symbol>
  <symbol id="crs" viewBox="0 0 20 20"><circle cx="10" cy="9" r="8.500" fill="#ddd" stroke="#666"/><path d="M1 9h18M3 4.500h14M3 13.500h14M10 0v20M6 19h8" stroke="#666"/><ellipse cx="10" cy="9" rx="4.500" ry="8.500" fill="none" stroke="#666"/></symbol>
  <symbol id="bubble" viewBox="0 0 20 20"><path d="M10 1c6 0 9.500 3.500 9.500 7.500 0 4-3 6.500-5.500 7l2 4-6-3.500C4 16 .500 12.500.500 8.500S4 1 10 1z" fill="#555"/><circle cx="5.500" cy="8.500" r="1.300" fill="#fff"/><circle cx="10" cy="8.500" r="1.300" fill="#fff"/><circle cx="14.500" cy="8.500" r="1.300" fill="#fff"/></symbol>
</svg>

<div class="app">
  <div class="screen-tab"></div>
  <header class="titlebar">
    <svg class="logo"><use href="#q"/></svg><span class="title">*raster_analysis — QGIS</span>
    <svg class="winbtns" viewBox="0 0 140 20"><path d="M0 10h13M59.500 6.500h8v9.500h-8zM61.500 6.500V4h8v10h-2M117 4l12 12M129 4l-12 12" fill="none" stroke="#777"/></svg>
  </header>
  <nav class="menubar"><span>Pro<u>j</u>ect</span><span><u>E</u>dit</span><span><u>V</u>iew</span><span><u>L</u>ayer</span><span><u>S</u>ettings</span><span><u>P</u>lugins</span><span>Vect<u>o</u>r</span><span><u>R</u>aster</span><span><u>D</u>atabase</span><span><u>W</u>eb</span><span><u>M</u>esh</span><span>Pro<u>c</u>essing</span><span><u>H</u>elp</span></nav>

  <div class="toolbar">
    <i class="grip first"></i>
    <b class="t"><svg><use href="#new"/></svg></b><b class="t"><svg><use href="#open"/></svg></b><b class="t"><svg><use href="#save"/></svg></b><b class="t"><svg><use href="#layout"/></svg></b><b class="t"><svg><use href="#manager"/></svg></b><b class="t"><svg><use href="#style"/></svg></b>
    <i class="grip"></i>
    <b class="t on"><svg><use href="#hand"/></svg></b><b class="t"><svg><use href="#pan"/></svg></b><b class="t"><svg><use href="#zin"/></svg></b><b class="t"><svg><use href="#zout"/></svg></b><b class="t"><svg><use href="#zfull"/></svg></b><b class="t"><svg><use href="#zsel"/></svg></b><b class="t"><svg><use href="#zlay"/></svg></b><b class="t off"><svg><use href="#znat"/></svg></b><b class="t"><svg><use href="#zlast"/></svg></b><b class="t off"><svg><use href="#znext"/></svg></b><b class="t"><svg><use href="#newmap"/></svg></b><b class="t"><svg><use href="#new3d"/></svg></b><b class="t"><svg><use href="#bm"/></svg></b><b class="t"><svg><use href="#showbm"/></svg></b><b class="t"><svg><use href="#clock"/></svg></b><b class="t"><svg><use href="#refresh"/></svg></b>
    <i class="grip"></i>
    <b class="t"><svg><use href="#ident"/></svg></b><b class="t"><svg><use href="#abacus"/></svg></b><b class="t on"><svg><use href="#gear"/></svg></b><b class="t"><svg><use href="#sigma"/></svg></b><b class="t"><svg><use href="#table"/></svg></b><i class="arr"></i><b class="t"><svg><use href="#ruler"/></svg></b><i class="arr"></i><b class="t"><svg><use href="#tip"/></svg></b><b class="t off"><svg><use href="#action"/></svg></b><i class="arr off"></i>
  </div>
  <div class="toolbar">
    <i class="grip first"></i>
    <b class="t"><svg><use href="#dsm"/></svg></b><b class="t"><svg><use href="#geopkg"/></svg></b><b class="t"><svg><use href="#nvec"/></svg></b><b class="t"><svg><use href="#nfea"/></svg></b><b class="t"><svg><use href="#chip"/></svg></b><b class="t"><svg><use href="#nmesh"/></svg></b><b class="t"><svg><use href="#nvt"/></svg></b>
    <i class="grip"></i>
    <b class="t off"><svg><use href="#pens"/></svg></b><b class="t"><svg><use href="#pen"/></svg></b><b class="t off"><svg><use href="#saveed"/></svg></b><b class="t off"><svg><use href="#line"/></svg></b><i class="arr off"></i><b class="t off"><svg><use href="#addpoly"/></svg></b><b class="t off"><svg><use href="#vertex"/></svg></b><i class="arr off"></i><b class="t off"><svg><use href="#modattr"/></svg></b><b class="t off"><svg><use href="#trash"/></svg></b><b class="t off"><svg><use href="#cut"/></svg></b><b class="t off"><svg><use href="#copy"/></svg></b><b class="t off"><svg><use href="#paste"/></svg></b><b class="t off"><svg><use href="#undo"/></svg></b><b class="t off"><svg><use href="#redo"/></svg></b>
    <i class="grip tight"></i>
    <b class="t"><svg><use href="#abc"/></svg></b><b class="t"><svg><use href="#diag"/></svg></b><i class="sep"></i><b class="t"><svg><use href="#abpin"/></svg></b><b class="t"><svg><use href="#redabc"/></svg></b><i class="sep"></i><b class="t off"><svg><use href="#l1"/></svg></b><b class="t off"><svg><use href="#l2"/></svg></b><b class="t off"><svg><use href="#l3"/></svg></b><b class="t off"><svg><use href="#l4"/></svg></b><b class="t off"><svg><use href="#l5"/></svg></b>
    <i class="grip"></i><b class="t"><svg><use href="#gplus"/></svg></b><b class="t"><svg><use href="#gmag"/></svg></b><i class="grip"></i><b class="t"><svg><use href="#pycon"/></svg></b><i class="grip"></i><b class="t"><svg><use href="#help"/></svg></b>
  </div>
  <div class="toolbar last">
    <i class="grip first"></i>
    <b class="t"><svg><use href="#sel"/></svg></b><i class="arr"></i><b class="t"><svg><use href="#eps"/></svg></b><i class="arr"></i><b class="t"><svg><use href="#desel"/></svg></b><i class="arr"></i><b class="t"><svg><use href="#selloc"/></svg></b><i class="arr"></i>
    <i class="grip"></i><b class="t"><svg><use href="#snap"/></svg></b><b class="t off"><svg><use href="#target"/></svg></b><i class="sep"></i><b class="t"><svg><use href="#cad"/></svg></b><b class="t off"><svg><use href="#cadadd"/></svg></b><b class="t"><svg><use href="#addpoly"/></svg></b><b class="t off"><svg><use href="#trace"/></svg></b><i class="sep"></i><b class="t"><svg><use href="#info"/></svg></b><b class="t"><svg><use href="#wrench"/></svg></b>
  </div>

  <main class="work">
    <aside class="sidebar">
      <i class="hgrip"></i>
      <div class="s"><svg><use href="#pvec"/></svg></div><div class="s"><svg><use href="#pras"/></svg></div><div class="s"><svg><use href="#pmesh"/></svg></div><div class="s"><svg><use href="#comma"/></svg></div><div class="s"><svg><use href="#pfea"/></svg></div><div class="s"><svg><use href="#pvt"/></svg></div><div class="s"><svg><use href="#pg"/></svg><i class="tri"></i></div><div class="s"><svg><use href="#wms"/></svg></div><div class="s"><svg><use href="#wcs"/></svg></div><div class="s"><svg><use href="#wfs"/></svg></div><div class="s"><svg><use href="#geopkg"/></svg><i class="tri"></i></div>
    </aside>
    <section class="left-dock">
      <div class="dock-title browser"><span>Browser</span><svg><use href="#dock"/></svg><svg><use href="#close"/></svg></div>
      <div class="browser-tree"></div>
      <div class="layers">
        <div class="layer"><i class="rtri"></i><em class="cb"><svg><use href="#check"/></svg></em><svg class="ric" viewBox="0 0 20 20"><use href="#raster" width="24" height="24"/></svg><span>forest_est_reprojected</span></div>
        <div class="layer current"><i class="rtri none"></i><em class="cb"><svg><use href="#check"/></svg></em><i class="black"></i><span>estonia</span></div>
      </div>
    </section>
    <canvas id="map-canvas" class="mapview" width="1054" height="803"></canvas>
    <section class="right-dock">
      <div class="dock-title"><span>Processing Toolbox</span><svg><use href="#dock"/></svg><svg><use href="#close"/></svg></div>
      <div class="ptools"><b><svg><use href="#gears"/></svg></b><b><svg><use href="#pym"/></svg></b><b><svg><use href="#clock"/></svg></b><b class="on"><svg><use href="#doc"/></svg></b><i></i><b><svg><use href="#editp"/></svg></b><i></i><b><svg><use href="#wrench"/></svg></b></div>
      <div class="field psearch"><svg><use href="#search"/></svg><span>Search...</span></div>
      <div class="ptree">
        <ul>
          <li><i class="rtri"></i><svg><use href="#clock"/></svg>Recently used</li>
          <li><i class="rtri"></i><svg><use href="#q"/></svg>3D Tiles</li>
          <li><i class="rtri"></i><svg><use href="#q"/></svg>Cartography</li>
          <li><i class="rtri"></i><svg><use href="#q"/></svg>Database</li>
          <li><i class="rtri"></i><svg><use href="#q"/></svg>File tools</li>
          <li><i class="rtri"></i><svg><use href="#q"/></svg>GPS</li>
          <li><i class="rtri"></i><svg><use href="#q"/></svg>Interpolation</li>
          <li><i class="rtri"></i><svg><use href="#q"/></svg>Layer tools</li>
          <li><i class="rtri"></i><svg><use href="#q"/></svg>Mesh</li>
          <li><i class="rtri"></i><svg><use href="#q"/></svg>Network analysis</li>
          <li><i class="rtri"></i><svg><use href="#q"/></svg>Plots</li>
          <li><i class="rtri"></i><svg><use href="#q"/></svg>Point cloud conversion</li>
        </ul>
        <div class="sbar"><i class="sb-up"></i><div class="sb-handle p"></div><div class="sb-groove"></div><i class="sb-dn"></i></div>
      </div>
      <i class="dots"></i>
      <div class="dock-title results"><span>Results Viewer</span><svg><use href="#dock"/></svg><svg><use href="#close"/></svg></div>
      <div class="panel r1"></div>
      <i class="dots small"></i>
      <div class="panel r2"></div>
    </section>
  </main>

  <footer class="status">
    <div class="field locator"><svg><use href="#search"/></svg><span>Type to locate (Ctrl+K)</span></div>
    <span class="lb coord">Coordinate</span><div class="field f-coord">6497050, 361578</div>
    <svg class="mouse"><use href="#mouse"/></svg>
    <span class="lb scale">Scale</span><div class="field f-scale"><span>1:1816403</span><em><i class="tri"></i></em></div>
    <svg class="lock"><use href="#lock"/></svg>
    <span class="lb magn">Magnifier</span><div class="field f-spin"><span>100%</span><em class="spin"><i class="utri"></i><i class="tri"></i></em></div>
    <span class="lb rot">Rotation</span><div class="field f-spin"><span>0.0 °</span><em class="spin"><i class="utri"></i><i class="tri"></i></em></div>
    <em class="cb"><svg><use href="#check"/></svg></em><span class="lb render">Render</span>
    <svg class="crs"><use href="#crs"/></svg><span class="lb epsg">EPSG:3301</span>
    <svg class="bubble"><use href="#bubble"/></svg>
  </footer>
</div>

<div class="dialog">
  <div class="dlg-title"><svg><use href="#q"/></svg><span>Layer Properties - estonia — Symbology</span><svg class="x" viewBox="0 0 14 14"><path d="M1 1l12 12M13 1L1 13" stroke="#000" stroke-width="1.100"/></svg></div>
  <div class="dlg-body">
    <div class="dlg-side">
      <div class="side-search"><svg><use href="#search"/></svg><i></i></div>
      <div class="side-main">
        <ul>
          <li><svg><use href="#info"/></svg>Information</li>
          <li><svg><use href="#source"/></svg>Source</li>
          <li class="sel"><svg><use href="#brush"/></svg>Symbology</li>
          <li><svg><use href="#abc"/></svg>Labels</li>
          <li><svg><use href="#masks"/></svg>Masks</li>
          <li><svg><use href="#cube"/></svg>3D View</li>
          <li><svg><use href="#diag"/></svg>Diagrams</li>
          <li><svg><use href="#fields"/></svg>Fields</li>
          <li><svg><use href="#form"/></svg>Attributes Form</li>
        </ul>
        <div class="sbar"><i class="sb-up"></i><div class="sb-handle s1"></div><div class="sb-groove"></div><i class="sb-dn"></i></div>
      </div>
    </div>
    <div class="dlg-main">
      <div class="combo renderer"><svg><use href="#single"/></svg><span>Single Symbol</span><i class="tri"></i></div>
      <div class="symrow">
        <div class="preview"><i></i></div>
        <div class="symtree">
          <div class="row top"><i class="tri"></i><em></em><b>Fill</b></div>
          <div class="row child"><em></em><span>Simple Fill</span></div>
        </div>
        <div class="symbtns">
          <b><svg viewBox="0 0 20 20"><path d="M7 1h6v6h6v6h-6v6H7v-6H1V7h6z" fill="#e9f4e9" stroke="#5a8c5a" stroke-width="1.300"/><path d="M10 4v12M4 10h12" stroke="#4f8f4f" stroke-width="2"/></svg></b>
          <b class="dim"><svg viewBox="0 0 20 20"><path d="M10 2l9 15H1z" fill="#b5bdc4" stroke="#8a949c"/></svg></b>
          <b class="dim"><svg viewBox="0 0 20 20"><path d="M1 6.500h18v7H1zM4 10h12" fill="#f2eaea" stroke="#d3a9a9" stroke-width="1.500"/></svg></b>
          <b class="dim"><svg viewBox="0 0 20 20"><path d="M10 17l9-15H1z" fill="#b5bdc4" stroke="#8a949c"/></svg></b>
          <b class="dim"><svg viewBox="0 0 20 20"><path d="M1 5h12v14H1z" fill="#ddd" stroke="#999"/><path d="M5 1h14v14H5z" fill="#f6f6f6" stroke="#999"/><path d="M12 12h8v8h-8z" fill="#cfc9a8"/></svg></b>
          <b class="dim"><svg viewBox="0 0 20 20"><path d="M6 5a4 4 0 0 1 8 0v5" fill="none" stroke="#999" stroke-width="2"/><path d="M2 9h14v9H2z" fill="#c9c096" stroke="#999"/><path d="M13 16h7l-3.500 4z" fill="#444"/></svg></b>
        </div>
      </div>
      <div class="props">
        <div class="prop-list">
          <div class="p-color"><span>Color</span><div class="colorbtn"><i></i></div><em><i class="tri"></i></em></div>
          <div class="p-row opacity"><span>Opacity</span><div class="slider"><i></i></div><div class="field f-op"><span>100.0 %</span><em class="spin"><i class="utri dimmed"></i><i class="tri"></i></em></div><svg class="ddo"><use href="#ddo"/></svg></div>
          <div class="p-row unit"><span>Unit</span><div class="combo"><span>Millimeters</span><i class="tri"></i></div></div>
          <div class="rule"></div>
          <div class="p-sym"><div class="field"><svg><use href="#search"/></svg><span>All Symbols</span><svg class="clear" viewBox="0 0 16 12"><path d="M5 0h11v12H5L0 6z" fill="#888"/><path d="M7 3l6 6M13 3L7 9" stroke="#fff" stroke-width="1.300"/></svg><em><i class="tri"></i></em></div><svg class="sty"><use href="#style"/></svg></div>
        </div>
        <div class="sbar psb"><i class="sb-up"></i><div class="sb-handle s2"></div><div class="sb-groove"></div><i class="sb-dn"></i></div>
      </div>
      <div class="rendering"><i class="bigtri"></i><b>Layer Rendering</b></div>
      <div class="dlg-btns"><button class="st">Style<i class="tri tiny"></i></button><div class="okmark"><button>OK</button></div><button>Cancel</button><button>Apply</button><button>Help</button></div>
    </div>
  </div>
</div>
<div class="layermark"></div>
<script src="map.js"></script>
</body>
</html>
```
FILE: styles.css
```css
* { box-sizing: border-box; }
body { margin: 0; width: 1920px; height: 1041px; overflow: hidden; background: #efefef; font-family: "Open Sans", "Noto Sans", sans-serif; font-size: 14px; letter-spacing: -0.25px; color: #000; }
i, em { font-style: normal; display: block; flex: none; }
svg { flex: none; display: block; }
.defs { position: absolute; width: 0; height: 0; }
symbol text { font-family: "Open Sans", sans-serif; letter-spacing: -0.3px; }
.app { display: flex; flex-direction: column; width: 1920px; height: 1041px; }
.screen-tab { position: absolute; left: 809px; top: 0; width: 301px; height: 1px; background: linear-gradient(90deg, #0078d7 60px, #222 60px); }

.titlebar { height: 29px; background: #fff; display: flex; align-items: center; color: #8c8c8c; flex: none; }
.logo { width: 20px; height: 20px; margin: 0 5px 0 2px; }
.title { flex: 1; letter-spacing: -0.12px; }
.winbtns { width: 140px; height: 20px; margin-right: 15px; }
.menubar { height: 26px; flex: none; border-bottom: 2px solid #d6d6d6; display: flex; align-items: center; padding-left: 13px; gap: 19.500px; color: #8f8f8f; letter-spacing: -0.18px; }
.menubar u { text-underline-offset: 2px; }

.toolbar { height: 48.500px; flex: none; display: flex; align-items: center; background: linear-gradient(#fafafa, #efefef); border-bottom: 1px solid #b5b5b5; }
.toolbar.last { height: 48px; border-bottom: 2px solid #b5b5b5; padding-left: 2px; }
.t { width: 41.250px; height: 40px; flex: none; display: flex; align-items: center; justify-content: center; }
.t svg { width: 28px; height: 28px; }
.t.on { width: 39.250px; margin: 0 1px; height: 39px; background: #dcdcdc; border: 1px solid #aaa; border-radius: 3px; }
.off svg { filter: grayscale(.75); opacity: .32; }
.grip { width: 20px; height: 24px; background: radial-gradient(circle at 1px 1px, #bbb 0.800px, transparent 1px) 10px 0 / 4px 4px repeat-y, radial-gradient(circle at 1px 1px, #bbb 0.800px, transparent 1px) 14px 0 / 4px 4px repeat-y; }
.grip.first { width: 15.500px; background-position: 6px 0, 10px 0; }
.grip.tight { width: 18px; margin-left: 0; }
.arr { width: 15px; padding-left: 3.500px; }
.arr::before, .tri { content: ""; display: block; width: 0; height: 0; border: 4.500px solid transparent; border-top: 5px solid #555; border-bottom: 0; }
.arr.off::before { border-top-color: #aaa; }
.sep { width: 9.500px; height: 24px; background: linear-gradient(#d0d0d0, #d0d0d0) 5px 0 / 1px 100% no-repeat; }
.utri { width: 0; height: 0; border: 4.500px solid transparent; border-bottom: 5px solid #555; border-top: 0; }
.utri.dimmed { border-bottom-color: #aaa; }
.rtri { width: 5px; height: 0; border: 5px solid transparent; border-left: 5px solid #555; border-right: 0; }
.rtri.none { visibility: hidden; }

.work { flex: none; height: 804px; display: flex; }
.sidebar { width: 64px; background: linear-gradient(90deg, #fafafa, #ececec); border-right: 1px solid #b5b5b5; padding-top: 6px; }
.hgrip { width: 21px; height: 7px; margin: 0 0 2px 24px; background: radial-gradient(circle at 1px 1px, #bbb 0.800px, transparent 1px) 0 0 / 4px 4px; }
.s { height: 40.100px; display: flex; align-items: center; padding-left: 10px; }
.s svg { width: 30px; height: 30px; }
.s .tri { margin-left: 8px; }
.left-dock { width: 377px; display: flex; flex-direction: column; padding-left: 1px; }
.dock-title { height: 27px; display: flex; align-items: center; gap: 4px; padding: 0 2px 0 4px; flex: none; letter-spacing: 0.02px; }
.dock-title span { flex: 1; }
.dock-title svg { width: 14px; height: 14px; }
.browser-tree { border: 1px solid #b5b5b5; height: 310px; margin: 36px 0 70px; }
.layers { border: 1px solid #b5b5b5; background: #fff; flex: 1; padding-top: 46px; }
.layer { height: 22.500px; display: flex; align-items: center; font-weight: 700; letter-spacing: -0.12px; padding-left: 10px; }
.layer .cb { margin: 0 9px 0 15px; }
.layer .ric { width: 17px; height: 17px; margin: 0 8px 0 1px; }
.layer .black { width: 20px; height: 20px; background: #000; margin: 0 7px 0 -1px; }
.layer.current { background: #efefef; }
.layer.current span { text-decoration: underline; text-underline-offset: 2px; }
.cb { width: 17px; height: 17px; border: 1px solid #bbb; background: #fff; border-radius: 2px; }
.cb svg { width: 15px; height: 15px; }
.layermark { position: absolute; left: 64px; top: 709px; width: 377px; height: 29px; border: 5px solid #ed1c24; }
.mapview { width: 1054px; height: 803px; margin: 2px 9px 0 9px; background: #fff; border-bottom: 1px solid #b5b5b5; flex: none; }

.right-dock { width: 407px; display: flex; flex-direction: column; }
.ptools { height: 33px; display: flex; align-items: center; padding-left: 5px; flex: none; }
.ptools b { width: 30.800px; height: 29px; display: flex; align-items: center; justify-content: center; }
.ptools svg { width: 20px; height: 20px; }
.ptools b.on { background: #dcdcdc; border: 1px solid #aaa; border-radius: 3px; }
.ptools i { width: 10px; height: 14px; background: linear-gradient(#ccc, #ccc) 5px 0 / 1px 100% no-repeat; }
.field { background: #fff; border: 1px solid #aaa; border-radius: 3px; display: flex; align-items: center; height: 27px; font-size: 13px; flex: none; letter-spacing: -0.3px; }
.field span { flex: 1; white-space: nowrap; }
.field > svg { width: 15px; height: 15px; }
.field em { width: 20px; align-self: stretch; border-left: 1px solid #aaa; display: flex; align-items: center; justify-content: center; background: linear-gradient(#fcfcfc, #efefef); border-radius: 0 3px 3px 0; }
.field em.spin { flex-direction: column; gap: 5px; background: #fff; width: 18px; }
.psearch { margin-top: 3px; color: #888; }
.psearch > svg { margin: 0 9px 0 10px; }
.psearch span { font-size: 13px; letter-spacing: -0.35px; }
.ptree { height: 259px; margin-top: 1px; display: flex; border-left: 1px solid #b5b5b5; background: #fff; overflow: hidden; flex: none; }
.ptree ul { flex: 1; margin: 0; padding: 1px 0 0; list-style: none; overflow: hidden; }
.ptree li { height: 22.550px; display: flex; align-items: center; padding-left: 10px; letter-spacing: 0; white-space: nowrap; }
.ptree li svg { width: 18px; height: 18px; margin: 0 8px 0 15px; }
.ptree .sbar { margin-right: 2px; }
.sbar { width: 17px; border-left: 1px solid #aaa; display: flex; flex-direction: column; background: #f7f7f7; flex: none; }
.sb-up, .sb-dn { height: 17px; display: flex; align-items: center; justify-content: center; background: #fafafa; }
.sb-up { border-bottom: 1px solid #b5b5b5; }
.sb-dn { border-top: 1px solid #b5b5b5; }
.sb-up::before { content: ""; border: 4.500px solid transparent; border-bottom: 5px solid #555; border-top: 0; }
.sb-dn::before { content: ""; border: 4.500px solid transparent; border-top: 5px solid #555; border-bottom: 0; }
.sb-handle { border-bottom: 1px solid #b5b5b5; background: linear-gradient(90deg, #f4f4f4, #fdfdfd); flex: none; }
.sb-handle.p { height: 85px; }
.sb-handle.s1 { height: 134px; }
.sb-handle.s2 { height: 50px; }
.sb-groove { flex: 1; background: #e3e3e3; }
.dots { height: 7px; width: 21px; margin-left: 194px; background: radial-gradient(circle at 1px 1px, #aaa 0.800px, transparent 1px) 0 3px / 4px 8px repeat-x; }
.dots.small { height: 6px; background-position: 0 1px; }
.dock-title.results { height: 25px; padding-top: 1px; }
.panel { background: #fff; border: 1px solid #b5b5b5; border-right: 0; flex: none; }
.r1 { height: 240px; }
.r2 { flex: 1; }

.status { flex: 1; display: flex; align-items: center; padding: 0 9px 0 5px; font-size: 13px; letter-spacing: -0.13px; }
.status .lb { flex: none; white-space: nowrap; }
.locator { width: 250px; color: #777; }
.locator > svg { margin: 0 9px 0 11px; }
.coord { width: 70px; margin-left: 676px; }
.f-coord { width: 126px; padding-left: 8px; letter-spacing: 0.12px; }
.mouse { width: 20px; height: 21px; margin: 0 16px 0 6px; }
.scale { width: 37px; }
.f-scale { width: 95px; padding-left: 1px; letter-spacing: 0.05px; }
.f-scale em { width: 24px; }
.lock { width: 15px; height: 20px; margin: 0 11px 0 16px; }
.magn { width: 61px; letter-spacing: -0.2px; }
.f-spin { width: 101px; padding-left: 5px; letter-spacing: -0.05px; }
.rot { width: 74px; padding-left: 11px; }
.status .cb { margin: 0 6px 0 7px; }
.render { width: 64px; }
.crs { width: 19px; height: 19px; margin-right: 2px; }
.epsg { width: 95px; letter-spacing: -0.15px; }
.bubble { width: 20px; height: 20px; }

.dialog { position: absolute; left: 70px; top: 215px; width: 1033px; height: 475px; border: 1px solid #6a6a6a; background: #efefef; box-shadow: 2px 5px 22px rgba(0, 0, 0, .42); display: flex; flex-direction: column; }
.dlg-title { height: 37px; background: #fff; display: flex; align-items: center; padding: 0 14px 1px 9px; flex: none; font-size: 14.500px; letter-spacing: -0.07px; }
.dlg-title svg { width: 20px; height: 20px; margin-right: 5px; }
.dlg-title span { flex: 1; }
.dlg-title .x { width: 14px; height: 14px; margin: 0; }
.dlg-body { display: flex; flex: 1; min-height: 0; }
.dlg-side { width: 188px; background: #5d5d5d; display: flex; flex-direction: column; }
.side-search { height: 27px; background: #fff; border: 2px solid #55aaf0; display: flex; align-items: center; padding-left: 10px; flex: none; }
.side-search svg { width: 15px; height: 15px; margin-right: 9px; }
.side-search i { width: 1px; height: 15px; background: #000; }
.side-main { flex: 1; min-height: 0; display: flex; padding-top: 8px; }
.side-main ul { flex: 1; margin: 0; padding: 0; list-style: none; overflow: hidden; }
.side-main li { height: 45px; display: flex; align-items: center; color: #f4f4f4; padding-left: 6px; letter-spacing: 0.05px; white-space: nowrap; }
.side-main li svg { width: 31px; height: 31px; margin-right: 9px; }
.side-main li.sel { background: #efefef; color: #000; padding-left: 9px; }
.side-main li.sel svg { margin-right: 10px; }
.side-main .sbar { width: 18px; }
.dlg-main { flex: 1; min-width: 0; padding: 4px 3px 4px 5px; display: flex; flex-direction: column; font-size: 13px; }
.combo { display: flex; align-items: center; border: 1px solid #aaa; border-radius: 3px; background: linear-gradient(#fbfbfb, #ededed); }
.combo span { flex: 1; letter-spacing: -0.55px; }
.combo .tri { margin-right: 9px; }
.renderer { height: 30px; padding-left: 8px; flex: none; }
.renderer svg { width: 17px; height: 18px; margin-right: 5px; }
.symrow { height: 172px; display: flex; border-bottom: 1px solid #aaa; padding: 7px 0 8px; flex: none; }
.preview { width: 165px; padding: 41px 0 0 41px; }
.preview i { width: 77px; height: 77px; background: #000; border: 1px solid #444; }
.symtree { width: 594px; border: 1px solid #b5b5b5; border-bottom: 0; background: #fff; font-size: 14px; }
.row { height: 22.500px; display: flex; align-items: center; letter-spacing: 0.1px; }
.row em { width: 20px; height: 20px; background: #000; border: 1px solid #222; margin-right: 7px; }
.row.top { background: #efefef; letter-spacing: -0.2px; }
.row.top .tri { margin: 0 12px 0 8px; }
.row.child { padding-left: 54px; }
.symbtns { display: grid; grid-template-columns: 30px 30px; grid-auto-rows: 29px; gap: 5px 8px; margin-left: 9px; }
.symbtns b { border: 1px solid #aaa; border-radius: 3px; background: linear-gradient(#fbfbfb, #efefef); display: flex; align-items: center; justify-content: center; }
.symbtns svg { width: 18px; height: 18px; }
.symbtns .dim { border-color: #c5c5c5; }
.dim svg { opacity: .6; }
.props { height: 156px; display: flex; flex: none; }
.prop-list { width: 818px; flex: none; margin-left: -4px; padding-top: 8px; }
.props .psb { margin: 11px 0 0 2px; height: 143px; }
.p-color { width: 812px; height: 32px; border: 5px solid #ed1c24; display: flex; align-items: center; }
.p-color span { width: 50px; margin-left: -1px; letter-spacing: -0.45px; }
.colorbtn { flex: 1; height: 22px; border-left: 1px solid #aaa; padding: 1px 5px 1px 5px; background: #f5f5f5; }
.colorbtn i { height: 20px; background: #000; border-radius: 3px; }
.p-color em { width: 13px; height: 22px; border-left: 1px solid #aaa; display: flex; align-items: center; padding-left: 2px; }
.p-row { display: flex; align-items: center; padding-left: 4px; }
.p-row > span { width: 51px; letter-spacing: -0.5px; }
.p-row.opacity { height: 42px; padding-top: 1px; }
.slider { width: 580px; height: 16px; display: flex; align-items: center; background: linear-gradient(#1f6fb5, #2196f3 2px, #2196f3 5px, #1f6fb5) 0 5px / 100% 7px no-repeat; justify-content: flex-end; margin-right: 5px; }
.slider i { width: 16px; height: 17px; background: #fcfcfc; border: 1px solid #aaa; border-radius: 3px; }
.f-op { width: 125px; height: 25px; padding-left: 5px; }
.ddo { width: 28px; height: 23px; margin-left: 11px; }
.p-row.unit { height: 35px; padding-bottom: 1px; }
.unit .combo { width: 756px; height: 26px; margin-left: -1px; padding-left: 5px; }
.rule { border-top: 1px solid #999; margin: 0 8px 9px 4px; }
.p-sym { display: flex; align-items: center; padding-left: 4px; }
.p-sym .field { width: 768px; }
.p-sym .field > svg { margin: 0 8px 0 13px; }
.p-sym .field span { letter-spacing: -0.45px; }
.p-sym .field .clear { width: 16px; height: 12px; margin: 0 11px 0 0; }
.p-sym .field em { width: 26px; }
.sty { width: 20px; height: 20px; margin-left: 13px; }
.rendering { height: 43px; display: flex; align-items: center; padding: 5px 0 0 6px; gap: 12px; letter-spacing: -0.15px; }
.bigtri { border: 6px solid transparent; border-left: 9px solid #333; border-right: 0; }
.dlg-btns { display: flex; align-items: center; height: 28px; margin-top: 1px; }
.dlg-btns button { width: 100px; height: 26px; margin: 0 1px 0 7px; border: 1px solid #aaa; border-radius: 3px; background: linear-gradient(#fbfbfb, #eee); font: 13px "Open Sans", sans-serif; letter-spacing: -0.4px; padding: 0; flex: none; color: #000; }
.dlg-btns .st { margin: 0 306px 0 0; display: flex; align-items: center; justify-content: flex-end; gap: 30px; padding-right: 7px; }
.tiny { border-width: 4px 3.500px 0; }
.okmark { width: 109px; height: 27px; border: 5px solid #ed1c24; margin-right: -2px; display: flex; flex: none; }
.okmark button { width: 99px; height: 17px; margin: 0; border: 0; border-left: 1px solid #7bb8ea; border-radius: 0; background: linear-gradient(#f2f6fa, #e9eef2); }
```
FILE: map.js
```js
// Draws the country layer and the forest raster cells above it.
(function () {
  var canvas = document.getElementById('map-canvas');
  var ctx = canvas.getContext('2d');
  var seed = 20731;
  function rnd() {
    seed = (seed * 1664525 + 1013904223) >>> 0;
    return seed / 4294967296;
  }
  ctx.translate(-450, -203);

  var mainland = [910,689, 905,640, 905,420, 1000,330, 1104,318, 1108,324, 1112,323, 1111,309, 1115,315, 1117,311, 1120,313, 1123,310, 1126,316, 1131,322, 1155,321, 1162,327, 1180,332, 1190,341, 1202,337, 1203,329, 1223,336, 1233,345, 1253,359, 1280,360, 1320,355, 1353,362, 1374,361, 1375,358, 1377,365, 1390,366, 1403,362, 1413,352, 1418,343, 1428,348, 1437,359, 1444,365, 1444,372, 1442,378, 1434,380, 1433,392, 1420,395, 1410,400, 1402,410, 1401,422, 1397,433, 1390,443, 1388,458, 1384,472, 1382,484, 1370,481, 1347,481, 1320,484, 1293,493, 1277,507, 1267,520, 1266,537, 1272,552, 1280,553, 1292,563, 1300,575, 1302,587, 1308,602, 1313,623, 1316,643, 1317,657, 1322,661, 1324,657, 1335,659, 1347,669, 1342,670, 1345,687, 1353,707, 1366,740, 1375,750, 1378,768, 1386,767, 1390,777, 1388,790, 1397,798, 1411,800, 1410,812, 1401,820, 1372,821, 1366,837, 1370,850, 1366,857, 1358,857, 1350,867, 1350,887, 1340,898, 1345,913, 1330,905, 1308,902, 1295,892, 1283,891, 1275,884, 1265,897, 1253,902, 1254,906, 1235,907, 1230,922, 1225,915, 1220,921, 1214,918, 1208,905, 1184,902, 1174,892, 1169,878, 1162,870, 1162,860, 1152,853, 1144,850, 1136,849, 1138,827, 1107,824, 1098,808, 1085,812, 1069,800, 1056,793, 1047,787, 1043,778, 1032,773, 1020,763, 1023,771, 1023,783, 1018,787, 1010,773, 1010,762, 1007,763, 989,765, 980,778, 951,793, 941,792, 929,802, 916,800, 894,810, 894,822, 884,826, 878,823, 884,800, 894,773, 897,757, 892,727, 897,710, 911,697];
  var lake = [1121,676, 1124,669, 1136,665, 1146,669, 1150,690, 1147,717, 1142,730, 1141,748, 1135,737, 1127,710, 1115,692];
  var saaremaa = [480,680, 492,689, 495,703, 505,712, 522,715, 526,730, 540,737, 549,738, 546,750, 543,763, 537,762, 532,757, 526,770, 521,783, 513,788, 512,797, 522,809, 530,800, 545,790, 546,773, 552,757, 557,745, 557,733, 565,723, 581,720, 591,715, 594,722, 598,714, 604,718, 606,727, 609,716, 616,712, 622,721, 630,722, 630,716, 624,707, 641,708, 645,700, 659,697, 662,689, 662,670, 480,670];
  var coast = [790,680, 803,689, 814,695, 829,698, 833,712, 840,718, 848,710, 863,707, 867,689, 867,670, 790,670];
  var islets = [
    [592,731, 594,731, 595,738, 600,742, 596,744, 594,748, 592,744, 587,742, 591,738],
    [818,744, 824,742, 825,748, 822,758, 818,758, 815,750],
    [702,838, 706,837, 710,843, 711,849, 706,849, 701,843],
    [844,720, 844,724, 840,728, 838,727],
    [1349,664, 1354,660, 1360,663, 1358,668, 1352,668]
  ];

  // Splits each edge and nudges the new vertices for a ragged coastline.
  function ragged(pts, amp) {
    var out = [], n = pts.length;
    for (var i = 0; i < n; i += 2) {
      var x1 = pts[i], y1 = pts[i + 1], x2 = pts[(i + 2) % n], y2 = pts[(i + 3) % n];
      var steps = Math.max(1, Math.round(Math.hypot(x2 - x1, y2 - y1) / 4));
      for (var k = 0; k < steps; k++) {
        var j = k ? amp : 0;
        out.push(x1 + (x2 - x1) * k / steps + (rnd() - .5) * j, y1 + (y2 - y1) * k / steps + (rnd() - .5) * j);
      }
    }
    return out;
  }
  function trace(path, pts) {
    path.moveTo(pts[0], pts[1]);
    for (var i = 2; i < pts.length; i += 2) path.lineTo(pts[i], pts[i + 1]);
    path.closePath();
  }
  var land = new Path2D();
  trace(land, ragged(mainland, 2));
  trace(land, ragged(saaremaa, 3));
  trace(land, ragged(coast, 3));
  trace(land, ragged(lake, 1.2));
  islets.forEach(function (p) { trace(land, p); });
  ctx.fillStyle = '#000';
  ctx.fill(land, 'evenodd');

  var grid = {};
  function node(x, y) {
    var k = x + ',' + y;
    if (!(k in grid)) grid[k] = rnd();
    return grid[k];
  }
  function noise(x, y, s) {
    x /= s; y /= s;
    var ix = Math.floor(x), iy = Math.floor(y), fx = x - ix, fy = y - iy, o = s * 1000;
    var a = node(ix + o, iy), b = node(ix + 1 + o, iy), c = node(ix + o, iy + 1), d = node(ix + 1 + o, iy + 1);
    return (a + (b - a) * fx) * (1 - fy) + (c + (d - c) * fx) * fy;
  }
  var ramp = ['#440154', '#46327e', '#365c8d', '#2f6b8e', '#277f8e', '#1fa187', '#35b779', '#4ac16d', '#6ece58', '#a0da39', '#c8e020', '#fde725'];
  ctx.save();
  ctx.clip(land, 'evenodd');
  for (var y = 305; y < 925; y++) {
    for (var x = 480; x < 1450; x++) {
      var n = noise(x, y, 36) * .35 + noise(x, y, 11) * .3 + noise(x, y, 4) * .35;
      var p = Math.max(0, n - .3) * .62;
      if (rnd() < p) {
        var violet = Math.hypot((x - 1240) / 24, (y - 440) / 58) < 1;
        var c = violet && rnd() < .5 ? 0 : Math.min(11, Math.floor(rnd() * 8 + noise(x + 50, y, 11) * 4.5));
        ctx.globalAlpha = .45 + rnd() * .5;
        ctx.fillStyle = ramp[c];
        ctx.fillRect(x, y, rnd() < .5 ? 2 : 1, 1);
      }
    }
  }
  ctx.restore();
})();
```
